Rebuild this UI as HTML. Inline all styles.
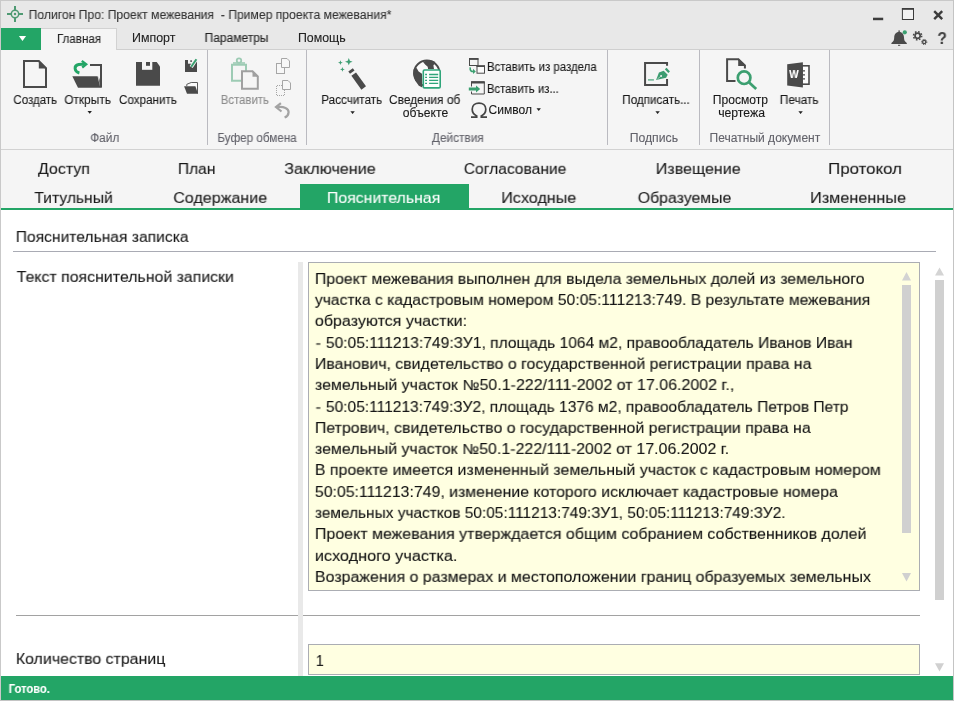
<!DOCTYPE html>
<html lang="ru"><head><meta charset="utf-8"><title>Полигон Про: Проект межевания</title>
<style>
html,body{margin:0;padding:0;}
body{width:954px;height:701px;position:relative;overflow:hidden;background:#fff;font-family:"Liberation Sans", sans-serif;}
.t{position:absolute;white-space:pre;line-height:1;transform-origin:0 0;will-change:transform;-webkit-text-stroke:0.1px currentColor;}
</style></head><body>
<div style="position:absolute;left:0px;top:0px;width:954px;height:701px;background:#ffffff;"></div>
<div style="position:absolute;left:0px;top:0px;width:954px;height:50px;background:#e8e8e8;"></div>
<div style="position:absolute;left:0px;top:49px;width:954px;height:1px;background:#cfcfcf;"></div>
<div style="position:absolute;left:1px;top:50px;width:952px;height:99px;background:#f5f5f5;"></div>
<div style="position:absolute;left:0px;top:149px;width:954px;height:1px;background:#d2d2d2;"></div>
<div style="position:absolute;left:1px;top:150px;width:952px;height:58px;background:#f5f5f5;"></div>
<div style="position:absolute;left:0px;top:208px;width:954px;height:2px;background:#23a566;"></div>
<div style="position:absolute;left:1px;top:28px;width:40px;height:22px;background:#23a566;"></div>
<div style="position:absolute;left:41px;top:28px;width:76px;height:22px;background:#f5f5f5;border-top:1px solid #d2d2d2;border-right:1px solid #d2d2d2;box-sizing:border-box;"></div>
<div style="position:absolute;left:207px;top:50px;width:1px;height:95px;background:#babac0;"></div>
<div style="position:absolute;left:306px;top:50px;width:1px;height:95px;background:#babac0;"></div>
<div style="position:absolute;left:607px;top:50px;width:1px;height:95px;background:#babac0;"></div>
<div style="position:absolute;left:699px;top:50px;width:1px;height:95px;background:#babac0;"></div>
<div style="position:absolute;left:829px;top:50px;width:1px;height:95px;background:#babac0;"></div>
<div style="position:absolute;left:300px;top:184px;width:169px;height:25px;background:#23a566;"></div>
<div style="position:absolute;left:13px;top:251px;width:923px;height:1px;background:#a9abb4;"></div>
<div style="position:absolute;left:298px;top:262px;width:5px;height:414px;background:#e9e9e9;"></div>
<div style="position:absolute;left:308px;top:262px;width:612px;height:329px;background:#ffffe1;border:1px solid #abadb3;box-sizing:border-box;"></div>
<div style="position:absolute;left:16px;top:615px;width:282px;height:1px;background:#a2a2a2;"></div>
<div style="position:absolute;left:303px;top:615px;width:617px;height:1px;background:#a2a2a2;"></div>
<div style="position:absolute;left:308px;top:644px;width:612px;height:31px;background:#ffffe1;border:1px solid #abadb3;box-sizing:border-box;"></div>
<div style="position:absolute;left:902px;top:285px;width:9px;height:248px;background:#d0d0d0;"></div>
<div style="position:absolute;left:935px;top:280px;width:9px;height:320px;background:#d0d0d0;"></div>
<div style="position:absolute;left:0px;top:676px;width:954px;height:24px;background:#23a566;"></div>
<div style="position:absolute;left:0px;top:0px;width:954px;height:1px;background:#c9c9c9;"></div>
<div style="position:absolute;left:0px;top:0px;width:1px;height:701px;background:#c9c9c9;"></div>
<div style="position:absolute;left:953px;top:0px;width:1px;height:701px;background:#c4c4c4;"></div>
<div style="position:absolute;left:0px;top:700px;width:954px;height:1px;background:#c4c4c4;"></div>
<svg width="954" height="701" viewBox="0 0 954 701" style="position:absolute;left:0;top:0;">
<!-- app logo -->
<g stroke="#4f9a73" fill="none">
<circle cx="15" cy="14" r="3.7" stroke-width="1.5"/>
<path d="M7 14H11.3M18.7 14H23M15 6V10.3M15 17.7V22" stroke-width="2"/>
</g>
<circle cx="15" cy="14" r="1.25" fill="#4f9a73"/>
<!-- file button arrow -->
<path d="M18.9 36.1H26.1L22.5 40.9Z" fill="#fff"/>
<!-- window controls -->
<rect x="873" y="17.7" width="10.2" height="2.5" fill="#3c3c3c"/>
<rect x="902.4" y="8.9" width="11.1" height="10.6" fill="#f2f2f2" stroke="#3c3c3c" stroke-width="1"/>
<rect x="901.9" y="8" width="12.1" height="1.7" fill="#3c3c3c"/>
<path d="M934.2 11.1L942.2 19.1M942.2 11.1L934.2 19.1" stroke="#3c3c3c" stroke-width="2.4" fill="none"/>
<!-- bell -->
<path d="M899.1 31.9C895.6 31.9 894.3 34.6 894.2 37.6C894.1 40.2 893.6 41.6 891.4 42.9V44H906.8V42.9C904.6 41.6 904.1 40.2 904 37.6C903.9 34.6 902.6 31.9 899.1 31.9Z" fill="#4a4a4a"/>
<rect x="898.3" y="30.4" width="1.7" height="1.6" fill="#6a6a6a"/>
<rect x="898" y="44.8" width="2.2" height="1" fill="#4a4a4a"/>
<circle cx="904.8" cy="32.3" r="2.1" fill="#3aa070"/>
<!-- gears -->
<g fill="none" stroke="#4a4a4a">
<circle cx="917.6" cy="35.8" r="2.6" stroke-width="1.7"/>
<circle cx="917.6" cy="35.8" r="4.1" stroke-width="1.5" stroke-dasharray="1.6 1.62"/>
<circle cx="924.2" cy="42" r="1.6" stroke-width="1.3"/>
<circle cx="924.2" cy="42" r="2.6" stroke-width="1" stroke-dasharray="1.1 0.95"/>
</g>
<!-- Создать -->
<path d="M24 61H38.8L46 68.2V87H24Z" fill="none" stroke="#4a4a4a" stroke-width="2"/>
<path d="M38.8 60.5V68.4H46.8Z" fill="#4a4a4a"/>
<!-- Открыть -->
<path d="M90 65H101V87" fill="none" stroke="#4a4a4a" stroke-width="2"/>
<path d="M72.3 76.2H97.6L100.3 87.8H78Z" fill="#4a4a4a"/>
<path d="M98.6 76.2L102 87.8H100" fill="#4a4a4a"/>
<path d="M79.4 73C74.2 71.6 73.4 65.6 78.6 64.5C80.5 64.1 82.5 64.3 85 64.3" fill="none" stroke="#23a566" stroke-width="2.9"/>
<path d="M81.8 60.9L86.2 64.3L82.2 67.5" fill="none" stroke="#23a566" stroke-width="2.3"/>
<path d="M87.5 111H91.9L89.7 113.8Z" fill="#222"/>
<!-- Сохранить -->
<path d="M136 62H156.7L160 66.4V85.8H136Z" fill="#4a4a4a"/>
<rect x="142" y="61.5" width="10.3" height="8.3" fill="#f5f5f5"/>
<rect x="146" y="62" width="4" height="3.8" fill="#4a4a4a"/>
<!-- small save-as -->
<rect x="185" y="60" width="12" height="12" fill="#4a4a4a"/>
<rect x="188" y="59.5" width="6" height="4.2" fill="#f5f5f5"/>
<rect x="190.3" y="60.3" width="1.6" height="1.6" fill="#4a4a4a"/>
<path d="M196.6 58.8L191.2 67" stroke="#f5f5f5" stroke-width="3.6"/>
<path d="M196.4 59.2L191.2 66.8" stroke="#3aa070" stroke-width="2"/>
<!-- small folder -->
<path d="M186.8 86V84.3L191.2 82.5H197.5V93.5" fill="#fbfbfb" stroke="#5a5a5a" stroke-width="1"/>
<path d="M184.1 86.2H195.4L198 93.8H187Z" fill="#4a4a4a"/>
<!-- Вставить (disabled) -->
<path d="M232 64.8H246V80.8H232Z" fill="none" stroke="#9dcbb4" stroke-width="2"/>
<path d="M233 63.8V62.2H245V63.8Z" fill="#9dcbb4"/>
<circle cx="239" cy="60.6" r="2.25" fill="none" stroke="#9dcbb4" stroke-width="1.8"/>
<path d="M242 71.2H252.5L257.8 76.5V88.8H242Z" fill="#f5f5f5" stroke="#a0a0a0" stroke-width="2"/>
<path d="M252.5 70.5V76.8H258.6Z" fill="#a0a0a0"/>
<!-- small copy -->
<g fill="#f7f7f7" stroke="#a6a6a6" stroke-width="1">
<rect x="276.5" y="63.5" width="8" height="10"/>
<path d="M281.5 58.5H287L289.5 61V67.5H281.5Z"/>
<path d="M282.5 80.5H288L290.5 83V89.5H282.5Z"/>
</g>
<path d="M282 85.5H276.5V95.5H284.5V90" fill="none" stroke="#a6a6a6" stroke-width="1" stroke-dasharray="1 1"/>
<!-- undo -->
<path d="M277 107.1C284 106.3 288.8 108.3 288.6 112.3C288.4 114.9 287 116.6 284.6 117.6" fill="none" stroke="#a3a3a3" stroke-width="2.2"/>
<path d="M280.9 103.1L276 107.1L281.5 111.5" fill="none" stroke="#a3a3a3" stroke-width="2.2"/>
<!-- Рассчитать wand -->
<path d="M351.4 75.7 L356.0 72.5 L366.0 86.2 L361.4 89.7Z" fill="#4a4a4a"/>
<path d="M348.3 71.4 L352.8 68.3 L354.5 70.5 L350.0 73.7Z" fill="#4a4a4a"/>
<g fill="#3f9f74">
<path d="M348.8 58.1L349.86 60.69L352.6 61.7L349.86 62.71L348.8 65.3L347.74 62.71L345.0 61.7L347.74 60.69Z"/>
<path d="M340.4 60.300000000000004L341.07 62.03L342.79999999999995 62.7L341.07 63.37L340.4 65.10000000000001L339.73 63.37L338.0 62.7L339.73 62.03Z"/>
<path d="M342.4 67.0L343.07 68.73L344.79999999999995 69.4L343.07 70.07L342.4 71.80000000000001L341.73 70.07L340.0 69.4L341.73 68.73Z"/>
</g>
<path d="M350.4 111.2H354.8L352.6 114Z" fill="#222"/>
<!-- Сведения об объекте globe -->
<circle cx="426.8" cy="73.2" r="12.7" fill="#fbfbfb" stroke="#4a4a4a" stroke-width="1.9"/>
<path d="M413.5 69.4 L416.6 68.0 L418.6 71.4 L422.0 73.7 L422.3 87.4 L418.8 85.7 L415.1 80.2 L413.2 74.0Z" fill="#4a4a4a"/>
<path d="M423.1 62.0 L426.8 60.4 L432.0 60.4 L435.4 62.0 L433.4 65.4 L434.0 69.0 L428.1 69.0 L427.7 66.7 L425.1 64.6Z" fill="#4a4a4a"/>
<rect x="423.3" y="70" width="16.9" height="17.9" rx="1.2" fill="#fdfefd" stroke="#2fa57a" stroke-width="1.6"/>
<g stroke="#2fa57a" stroke-width="1.3">
<path d="M425.1 74.5H427M429.1 74.5H438.2M425.1 77.4H427M429.1 77.4H438.2M425.1 80.4H427M429.1 80.4H438.2M425.1 83.3H427M429.1 83.3H438.2"/>
</g>
<!-- Вставить из раздела -->
<rect x="469.5" y="59" width="8.5" height="6.5" fill="none" stroke="#4a4a4a" stroke-width="1"/>
<rect x="469" y="58" width="9.5" height="1.8" fill="#4a4a4a"/>
<rect x="477" y="66.2" width="7.5" height="7" fill="#fafafa" stroke="#4a4a4a" stroke-width="1"/>
<rect x="476.5" y="65.2" width="8.5" height="1.8" fill="#4a4a4a"/>
<path d="M470.2 67.4C469.8 71 471.4 71.7 473.8 71.5" fill="none" stroke="#3aa070" stroke-width="1.6"/>
<path d="M473 68.8L475.8 71.4L473 74Z" fill="#3aa070"/>
<!-- Вставить из... -->
<path d="M471.5 86.5V82H484.3V94H471.5V91.5" fill="none" stroke="#4a4a4a" stroke-width="1"/>
<rect x="471" y="81.2" width="13.8" height="2.3" fill="#4a4a4a"/>
<path d="M468.8 87.4H476V85.4L480.2 88.9L476 92.4V90.4H468.8Z" fill="#3aa070"/>
<!-- omega -->
<path d="M471 117.2H476.7V115.9C473.6 114.4 472.2 112 472.2 109.2C472.2 105.4 475.2 103.2 479 103.2C482.8 103.2 485.8 105.4 485.8 109.2C485.8 112 484.4 114.4 481.3 115.9V117.2H487" fill="none" stroke="#444" stroke-width="1.7"/>
<!-- Символ arrow -->
<path d="M536.5 108.3H540.9L538.7 111.1Z" fill="#222"/>
<!-- Подписать -->
<path d="M667.05 65.8V63.06H645.06V84.9H667.05V79.1" fill="none" stroke="#4a4a4a" stroke-width="2"/>
<path d="M648 79.9H653.9" stroke="#5fae8a" stroke-width="1.4"/>
<path d="M656.08 79.88 L658.96 72.54 L663.68 70.79 L667.69 74.75 L666.15 77.67Z" fill="#3d9d71"/>
<path d="M664.81 69.20 L666.56 67.81 L669.95 71.41 L668.30 72.95Z" fill="#3d9d71"/>
<circle cx="661.1" cy="76" r="0.95" fill="#f5f5f5"/>
<path d="M660.6 76.5L657.4 79" stroke="#f5f5f5" stroke-width="0.5"/>
<path d="M655.4 111.2H659.8L657.6 114Z" fill="#222"/>
<!-- Просмотр чертежа -->
<path d="M735.5 81H727.1V59.3H738.4L744.9 65.4V68.6" fill="none" stroke="#4a4a4a" stroke-width="2"/>
<path d="M738.2 58.4V65.9H745.9Z" fill="#4a4a4a"/>
<circle cx="744.1" cy="77.7" r="6.3" fill="#f5f5f5" stroke="#3c9f70" stroke-width="2.7"/>
<path d="M748.9 82.3L756.2 89.1" stroke="#3c9f70" stroke-width="2.7"/>
<!-- Печать (word) -->
<rect x="802" y="65.8" width="7" height="18.4" fill="#fdfdfd" stroke="#4a4a4a" stroke-width="1.6"/>
<path d="M802.9 70.9H805M802.9 74.9H805M802.9 78.9H805" stroke="#4a4a4a" stroke-width="1.3"/>
<path d="M787.2 64.2L802.9 62.2V87.6L787.2 85.5Z" fill="#4a4a4a"/>
<path d="M798.4 111.2H802.8L800.6 114Z" fill="#222"/>
<!-- scroll arrows -->
<path d="M902 280.4L906.5 272L911 280.4Z" fill="#d3d3d3"/>
<path d="M902 573L906.5 581.6L911 573Z" fill="#d0d0d0"/>
<path d="M935 275.6L939.5 267.4L944 275.6Z" fill="#d4d4d4"/>
<path d="M935 663.2L939.5 671.6L944 663.2Z" fill="#d0d0d0"/>
</svg>

<span class="t" style="left:28px;top:9.00px;font-size:12.5px;color:#333;transform:translateX(0.61px) scaleX(0.9718)">Полигон Про: Проект межевания  - Пример проекта межевания*</span>
<span class="t" style="left:56px;top:32.80px;font-size:12px;color:#222;transform:translateX(0.97px) scaleX(0.9646)">Главная</span>
<span class="t" style="left:131px;top:31.80px;font-size:12px;color:#222;transform:translateX(0.96px) scaleX(1.0339)">Импорт</span>
<span class="t" style="left:204px;top:31.80px;font-size:12px;color:#222;transform:translateX(0.54px) scaleX(0.9992)">Параметры</span>
<span class="t" style="left:297px;top:31.80px;font-size:12px;color:#222;transform:translateX(0.99px) scaleX(1.0301)">Помощь</span>
<span class="t" style="left:13px;top:93.60px;font-size:12px;color:#181818;transform:translateX(0.38px) scaleX(0.9588)">Создать</span>
<span class="t" style="left:64px;top:93.60px;font-size:12px;color:#181818;transform:translateX(0.37px) scaleX(0.9857)">Открыть</span>
<span class="t" style="left:118px;top:93.60px;font-size:12px;color:#181818;transform:translateX(0.97px) scaleX(0.9697)">Сохранить</span>
<span class="t" style="left:220px;top:93.60px;font-size:12px;color:#8c8c8c;transform:translateX(0.76px) scaleX(0.9486)">Вставить</span>
<span class="t" style="left:321px;top:93.60px;font-size:12px;color:#181818;transform:translateX(0.31px) scaleX(0.9726)">Рассчитать</span>
<span class="t" style="left:388px;top:93.60px;font-size:12px;color:#181818;transform:translateX(0.95px) scaleX(0.9951)">Сведения об</span>
<span class="t" style="left:402px;top:106.60px;font-size:12px;color:#181818;transform:translateX(0.81px) scaleX(1.0131)">объекте</span>
<span class="t" style="left:486px;top:60.80px;font-size:12px;color:#181818;transform:translateX(0.96px) scaleX(0.9522)">Вставить из раздела</span>
<span class="t" style="left:486px;top:82.50px;font-size:12px;color:#181818;transform:translateX(0.96px) scaleX(0.9396)">Вставить из...</span>
<span class="t" style="left:488px;top:103.60px;font-size:12px;color:#181818;transform:translateX(0.56px) scaleX(1.0046)">Символ</span>
<span class="t" style="left:622px;top:93.60px;font-size:12px;color:#181818;transform:translateX(0.24px) scaleX(0.9724)">Подписать...</span>
<span class="t" style="left:712px;top:93.60px;font-size:12px;color:#181818;transform:translateX(0.73px) scaleX(1.0086)">Просмотр</span>
<span class="t" style="left:718px;top:106.60px;font-size:12px;color:#181818;transform:translateX(0.16px) scaleX(1.0192)">чертежа</span>
<span class="t" style="left:779px;top:93.60px;font-size:12px;color:#181818;transform:translateX(0.75px) scaleX(0.9874)">Печать</span>
<span class="t" style="left:90px;top:132.00px;font-size:12px;color:#62626a;transform:translateX(0.30px) scaleX(0.9829)">Файл</span>
<span class="t" style="left:217px;top:132.00px;font-size:12px;color:#62626a;transform:translateX(0.43px) scaleX(0.9728)">Буфер обмена</span>
<span class="t" style="left:431px;top:132.00px;font-size:12px;color:#62626a;transform:translateX(0.81px) scaleX(0.9892)">Действия</span>
<span class="t" style="left:629px;top:132.00px;font-size:12px;color:#62626a;transform:translateX(0.66px) scaleX(1.0190)">Подпись</span>
<span class="t" style="left:709px;top:132.00px;font-size:12px;color:#62626a;transform:translateX(0.61px) scaleX(1.0028)">Печатный документ</span>
<span class="t" style="left:37px;top:161.00px;font-size:16px;color:#181818;transform-origin:0 13.00px;transform:translateX(0.92px) scale(0.9954,0.9167)">Доступ</span>
<span class="t" style="left:177px;top:161.00px;font-size:16px;color:#181818;transform-origin:0 13.00px;transform:translateX(0.84px) scale(0.9747,0.9167)">План</span>
<span class="t" style="left:284px;top:161.00px;font-size:16px;color:#181818;transform-origin:0 13.00px;transform:translateX(0.28px) scale(1.0086,0.9167)">Заключение</span>
<span class="t" style="left:463px;top:161.00px;font-size:16px;color:#181818;transform-origin:0 13.00px;transform:translateX(0.77px) scale(0.9757,0.9167)">Согласование</span>
<span class="t" style="left:655px;top:161.00px;font-size:16px;color:#181818;transform-origin:0 13.00px;transform:translateX(0.69px) scale(1.0028,0.9167)">Извещение</span>
<span class="t" style="left:828px;top:161.00px;font-size:16px;color:#181818;transform-origin:0 13.00px;transform:translateX(0.07px) scale(1.0556,0.9167)">Протокол</span>
<span class="t" style="left:34px;top:189.80px;font-size:16px;color:#181818;transform-origin:0 13.00px;transform:translateX(0.37px) scale(0.9777,0.9167)">Титульный</span>
<span class="t" style="left:173px;top:189.80px;font-size:16px;color:#181818;transform-origin:0 13.00px;transform:translateX(0.31px) scale(1.0032,0.9167)">Содержание</span>
<span class="t" style="left:326px;top:189.80px;font-size:16px;color:#ffffff;transform-origin:0 13.00px;transform:translateX(0.88px) scale(0.9911,0.9167)">Пояснительная</span>
<span class="t" style="left:501px;top:189.80px;font-size:16px;color:#181818;transform-origin:0 13.00px;transform:translateX(0.26px) scale(1.0077,0.9167)">Исходные</span>
<span class="t" style="left:637px;top:189.80px;font-size:16px;color:#181818;transform-origin:0 13.00px;transform:translateX(0.71px) scale(0.9919,0.9167)">Образуемые</span>
<span class="t" style="left:810px;top:189.80px;font-size:16px;color:#181818;transform-origin:0 13.00px;transform:translateX(0.07px) scale(1.0147,0.9167)">Измененные</span>
<span class="t" style="left:15px;top:228.60px;font-size:16px;color:#181818;transform-origin:0 13.00px;transform:translateX(0.71px) scale(0.9768,0.9167)">Пояснительная записка</span>
<span class="t" style="left:16px;top:268.80px;font-size:16px;color:#181818;transform-origin:0 13.00px;transform:translateX(0.63px) scale(0.9935,0.9167)">Текст пояснительной записки</span>
<span class="t" style="left:15px;top:650.80px;font-size:16px;color:#181818;transform-origin:0 13.00px;transform:translateX(0.82px) scale(0.9939,0.9167)">Количество страниц</span>
<span class="t" style="left:315px;top:653.00px;font-size:16px;color:#181818;transform-origin:0 13.00px;transform:translateX(0.78px) scale(0.9000,0.9167)">1</span>
<span class="t" style="left:8px;top:682.60px;font-size:12px;color:#ffffff;font-weight:bold;transform:translateX(0.70px) scaleX(0.9321)">Готово.</span>
<span class="t" style="left:789px;top:68.60px;font-size:11.5px;color:#ffffff;font-weight:bold;transform:translateX(0.20px) scaleX(0.8701)">W</span>
<span class="t" style="left:937px;top:29.90px;font-size:17px;color:#444;font-weight:bold;transform:translateX(0.43px) scaleX(0.8991)">?</span>
<span class="t" style="left:314px;top:270.70px;font-size:16px;color:#111;transform-origin:0 13.00px;transform:translateX(0.85px) scale(0.9892,0.9167)">Проект межевания выполнен для выдела земельных долей из земельного</span>
<span class="t" style="left:314px;top:292.00px;font-size:16px;color:#111;transform-origin:0 13.00px;transform:translateX(0.85px) scale(0.9809,0.9167)">участка с кадастровым номером 50:05:111213:749. В результате межевания</span>
<span class="t" style="left:314px;top:313.30px;font-size:16px;color:#111;transform-origin:0 13.00px;transform:translateX(0.85px) scale(1.0026,0.9167)">образуются участки:</span>
<span class="t" style="left:315px;top:334.60px;font-size:16px;color:#111;transform-origin:0 13.00px;transform:translateX(0.58px) scale(1.0353,0.9167)">-</span>
<span class="t" style="left:325px;top:334.60px;font-size:16px;color:#111;transform-origin:0 13.00px;transform:translateX(0.85px) scale(0.9747,0.9167)">50:05:111213:749:ЗУ1, площадь 1064 м2, правообладатель Иванов Иван</span>
<span class="t" style="left:314px;top:355.90px;font-size:16px;color:#111;transform-origin:0 13.00px;transform:translateX(0.85px) scale(0.9926,0.9167)">Иванович, свидетельство о государственной регистрации права на</span>
<span class="t" style="left:314px;top:377.20px;font-size:16px;color:#111;transform-origin:0 13.00px;transform:translateX(0.85px) scale(0.9994,0.9167)">земельный участок №50.1-222/111-2002 от 17.06.2002 г.,</span>
<span class="t" style="left:315px;top:398.50px;font-size:16px;color:#111;transform-origin:0 13.00px;transform:translateX(0.58px) scale(1.0353,0.9167)">-</span>
<span class="t" style="left:325px;top:398.50px;font-size:16px;color:#111;transform-origin:0 13.00px;transform:translateX(0.85px) scale(0.9725,0.9167)">50:05:111213:749:ЗУ2, площадь 1376 м2, правообладатель Петров Петр</span>
<span class="t" style="left:314px;top:419.80px;font-size:16px;color:#111;transform-origin:0 13.00px;transform:translateX(0.85px) scale(0.9940,0.9167)">Петрович, свидетельство о государственной регистрации права на</span>
<span class="t" style="left:314px;top:441.10px;font-size:16px;color:#111;transform-origin:0 13.00px;transform:translateX(0.85px) scale(0.9977,0.9167)">земельный участок №50.1-222/111-2002 от 17.06.2002 г.</span>
<span class="t" style="left:314px;top:462.40px;font-size:16px;color:#111;transform-origin:0 13.00px;transform:translateX(0.85px) scale(0.9937,0.9167)">В проекте имеется измененный земельный участок с кадастровым номером</span>
<span class="t" style="left:314px;top:483.70px;font-size:16px;color:#111;transform-origin:0 13.00px;transform:translateX(0.85px) scale(0.9909,0.9167)">50:05:111213:749, изменение которого исключает кадастровые номера</span>
<span class="t" style="left:314px;top:505.00px;font-size:16px;color:#111;transform-origin:0 13.00px;transform:translateX(0.85px) scale(0.9644,0.9167)">земельных участков 50:05:111213:749:ЗУ1, 50:05:111213:749:ЗУ2.</span>
<span class="t" style="left:314px;top:526.30px;font-size:16px;color:#111;transform-origin:0 13.00px;transform:translateX(0.85px) scale(0.9980,0.9167)">Проект межевания утверждается общим собранием собственников долей</span>
<span class="t" style="left:314px;top:547.60px;font-size:16px;color:#111;transform-origin:0 13.00px;transform:translateX(0.85px) scale(1.0144,0.9167)">исходного участка.</span>
<span class="t" style="left:314px;top:568.90px;font-size:16px;color:#111;transform-origin:0 13.00px;transform:translateX(0.85px) scale(0.9966,0.9167)">Возражения о размерах и местоположении границ образуемых земельных</span>
</body></html>
